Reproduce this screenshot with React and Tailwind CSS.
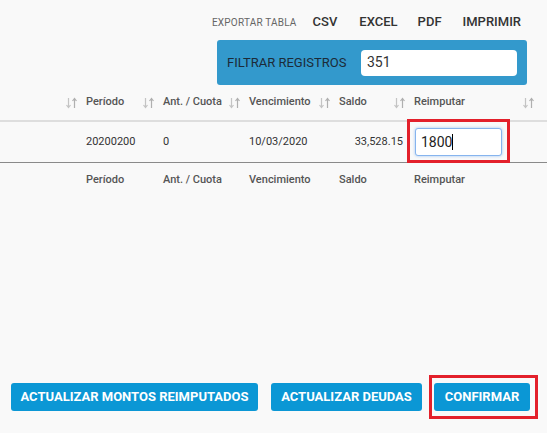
import React from "react";

const columns = ["", "Período", "Ant. / Cuota", "Vencimiento", "Saldo", "Reimputar"];
const grid = "grid grid-cols-[80px_77px_86px_90px_75px_129px_1fr]";

function SortIcon() {
  return (
    <svg width="11" height="12" viewBox="0 0 11 12" className="shrink-0">
      <g stroke="#c4c4c4" strokeWidth="1.2" fill="none">
        <path d="M2.5 1v9.5M0.5 8l2 2.5 2-2.5" />
        <path d="M8.5 11V1.5M6.5 4l2-2.5 2 2.5" stroke="#b0b0b0" />
      </g>
    </svg>
  );
}

export default function App() {
  return (
    <div className="w-[547px] h-[433px] bg-[#f9f9f9] font-['Roboto',sans-serif] overflow-hidden">
      {/* export links */}
      <div className="flex items-baseline justify-end pr-[26px] pt-[12px] h-[40px]">
        <span className="text-[10px] text-[#666] mr-[16px] tracking-[0.2px]">EXPORTAR TABLA</span>
        <span className="text-[13px] font-medium text-[#333] mr-[22px]">CSV</span>
        <span className="text-[13px] font-medium text-[#333] mr-[20px]">EXCEL</span>
        <span className="text-[13px] font-medium text-[#333] mr-[21px]">PDF</span>
        <span className="text-[13px] font-medium text-[#333]">IMPRIMIR</span>
      </div>

      {/* filter */}
      <div className="flex justify-end pr-[20px]">
        <div className="w-[310px] h-[45px] bg-[#3399cc] rounded-[3px] flex items-center justify-between pl-[10px] pr-[10px]">
          <span className="text-[13px] text-[#1c2b38]">FILTRAR REGISTROS</span>
          <div className="w-[156px] h-[26px] bg-white rounded-[4px] flex items-center pl-[6px] text-[14px] text-[#333]">
            351
          </div>
        </div>
      </div>

      {/* table */}
      <div className={`${grid} h-[37px] items-center border-b-2 border-[#dedede] text-[11px] font-medium text-[#555]`}>
        {columns.map((c, i) => (
          <div key={i} className="flex items-center justify-between pl-[6px] pr-[3px]">
            <span>{c}</span>
            <SortIcon />
          </div>
        ))}
      </div>
      <div className={`${grid} h-[41px] items-center border-b border-[#8a8a8a] text-[11px] text-[#333]`}>
        <div />
        <div className="pl-[6px]">20200200</div>
        <div className="pl-[6px]">0</div>
        <div className="pl-[6px]">10/03/2020</div>
        <div className="pr-[5px] text-right">33,528.15</div>
        <div className="relative pl-[7px]">
          <div className="absolute left-[-1px] top-[-9px] w-[103px] h-[44px] border-[3px] border-[#e3202b]" />
          <div className="relative w-[87px] h-[28px] bg-white border border-[#86b4ee] rounded-[3px] shadow-[0_0_3px_#9cc3f2] flex items-center pl-[5px] text-[14px] text-[#222]">
            1800
            <span className="inline-block w-px h-[16px] bg-black" />
          </div>
        </div>
      </div>
      <div className={`${grid} h-[34px] items-center text-[11px] font-medium text-[#555]`}>
        {columns.map((c, i) => (
          <div key={i} className="pl-[6px]">{c}</div>
        ))}
      </div>

      {/* actions */}
      <div className="flex items-center h-[44px] mt-[178px] pl-[11px]">
        <button className="h-[28px] w-[247px] bg-[#0b97d5] rounded-[3px] text-white text-[13px] font-bold">
          ACTUALIZAR MONTOS REIMPUTADOS
        </button>
        <button className="h-[28px] w-[151px] ml-[13px] bg-[#0b97d5] rounded-[3px] text-white text-[13px] font-bold">
          ACTUALIZAR DEUDAS
        </button>
        <div className="ml-[7px] h-[44px] border-[3px] border-[#e3202b] flex items-center pl-[2px] pr-[5px]">
          <button className="h-[28px] w-[96px] bg-[#0b97d5] rounded-[3px] text-white text-[13px] font-bold">
            CONFIRMAR
          </button>
        </div>
      </div>
    </div>
  );
}
